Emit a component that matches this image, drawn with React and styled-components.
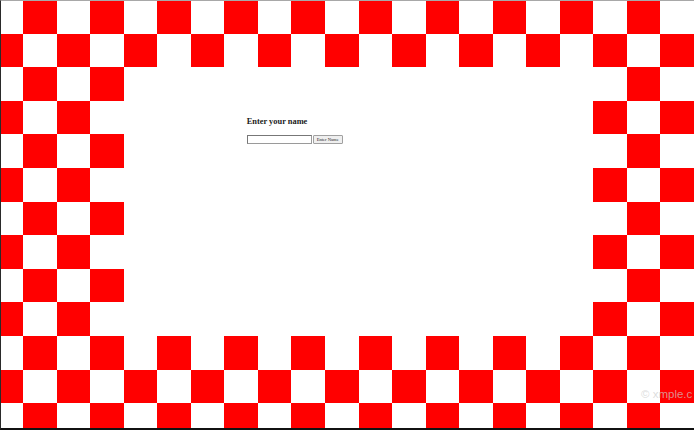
import React from 'react';
import styled, { createGlobalStyle } from 'styled-components';

const COLS = 21;
const ROWS = 13;
// area covered by the white panel (0-based cells)
const PANEL = { c0: 4, c1: 17, r0: 2, r1: 9 };

const GlobalStyle = createGlobalStyle`
    html, body {
        margin: 0;
        padding: 0;
        background: #fff;
        overflow: hidden;
    }
    body {
        font-family: "Liberation Serif", "Times New Roman", serif;
    }
`

const Frame = styled.div`
    position: relative;
    width: 694px;
    height: 430px;
    box-sizing: border-box;
    overflow: hidden;
    border-top: 1px solid #a8a8a8;
    border-left: 1px solid #2a2a2a;
    border-bottom: 2px solid #111;
    background: #fff;
`

const Board = styled.div`
    display: grid;
    grid-template-columns: repeat(${COLS}, 33.55px);
    grid-template-rows: repeat(${ROWS}, 33.6px);
    margin-left: -11.5px;
    margin-top: -1px;
`

const Cell = styled.div`
    background: ${p => (p.$red ? '#ff0000' : '#ffffff')};
`

const Panel = styled.div`
    grid-column: ${PANEL.c0 + 1} / ${PANEL.c1 + 2};
    grid-row: ${PANEL.r0 + 1} / ${PANEL.r1 + 2};
    background: #fff;
    padding: 50px 0 0 123px;
    box-sizing: border-box;
`

const Title = styled.h3`
    margin: 0;
    font-family: "Liberation Serif", "Times New Roman", serif;
    font-size: 8.4px;
    font-weight: bold;
    color: #1a1a1a;
    line-height: 10px;
`

const Row = styled.form`
    display: flex;
    align-items: center;
    gap: 1px;
    margin-top: 8px;
`

const NameInput = styled.input`
    width: 65px;
    height: 9px;
    box-sizing: border-box;
    padding: 0;
    border: 1px solid #9a9a9a;
    border-top-color: #777;
    border-left-color: #777;
    background: #fff;
    outline: none;
`

const Button = styled.button`
    width: 30px;
    height: 9px;
    box-sizing: border-box;
    padding: 0;
    border: 1px solid #a0a0a0;
    border-radius: 1px;
    background: #efefef;
    font-family: "Liberation Serif", "Times New Roman", serif;
    font-size: 4.6px;
    line-height: 7px;
    color: #222;
    white-space: nowrap;
    overflow: hidden;
`

const Watermark = styled.span`
    position: absolute;
    left: 640px;
    top: 387px;
    font-family: "Liberation Sans", Arial, sans-serif;
    font-size: 11.5px;
    color: rgba(205, 205, 205, 0.7);
    white-space: nowrap;
    pointer-events: none;
`

function inPanel(r, c) {
    return r >= PANEL.r0 && r <= PANEL.r1 && c >= PANEL.c0 && c <= PANEL.c1;
}

export default function App() {
    const cells = [];
    for (let r = 0; r < ROWS; r++) {
        for (let c = 0; c < COLS; c++) {
            if (inPanel(r, c)) continue;
            cells.push(<Cell key={`${r}-${c}`} $red={(r + c) % 2 === 1} />);
        }
    }

    return (
        <>
            <GlobalStyle />
            <Frame>
                <Board>
                    <Panel>
                        <Title>Enter your name</Title>
                        <Row onSubmit={e => e.preventDefault()}>
                            <NameInput type="text" />
                            <Button type="submit">Enter Name</Button>
                        </Row>
                    </Panel>
                    {cells}
                </Board>
                <Watermark>© xmple.c</Watermark>
            </Frame>
        </>
    );
}
